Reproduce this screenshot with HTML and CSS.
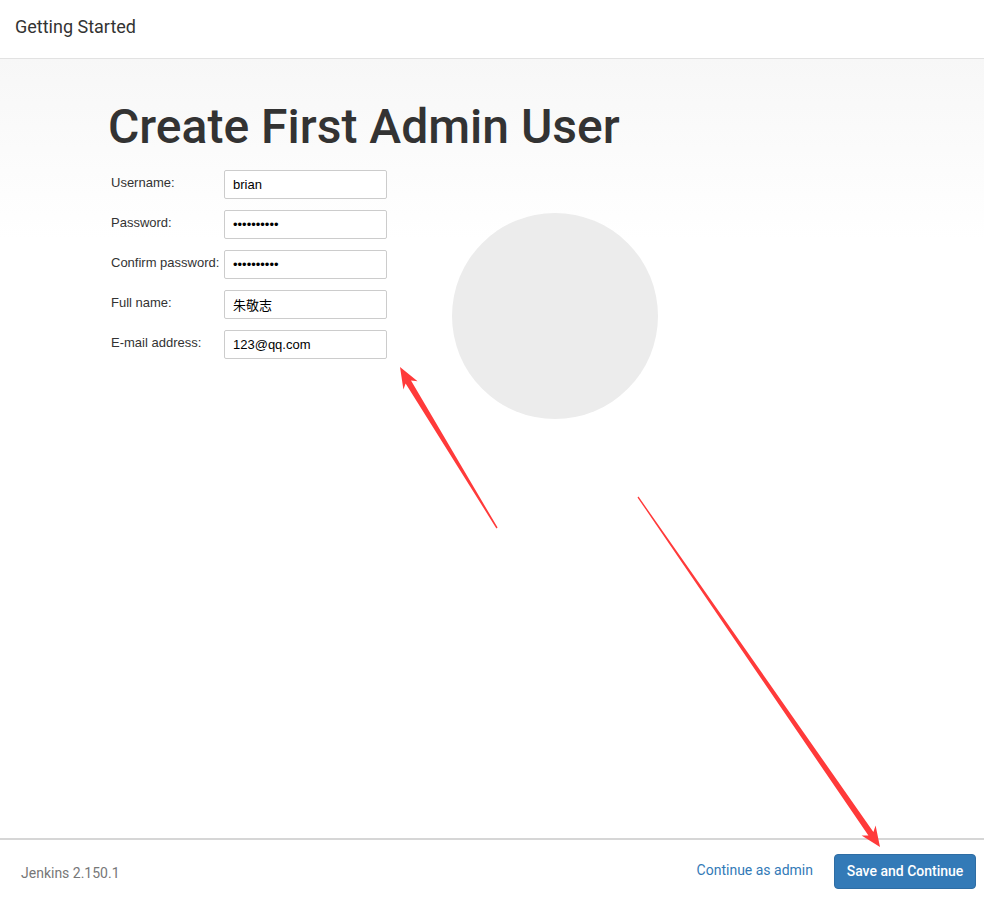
FILE: index.html
```html
<!DOCTYPE html>
<html lang="en">
<head>
<meta charset="utf-8">
<title>Getting Started</title>
<link rel="stylesheet" href="styles.css">
</head>
<body>
<div class="page">
  <header class="header">Getting Started</header>
  <main class="main">
    <h1 class="title">Create First Admin User</h1>
    <div class="content">
      <form class="form">
        <label class="label" for="u">Username:</label>
        <input class="input" id="u" type="text" value="brian">
        <label class="label" for="p">Password:</label>
        <input class="input" id="p" type="password" value="1234567890">
        <label class="label" for="c">Confirm password:</label>
        <input class="input" id="c" type="password" value="1234567890">
        <label class="label" for="f">Full name:</label>
        <input class="input" id="f" type="text" value="朱敬志">
        <label class="label" for="e">E-mail address:</label>
        <input class="input" id="e" type="text" value="123@qq.com">
      </form>
      <div class="circle"></div>
    </div>
  </main>
  <footer class="footer">
    <span class="version">Jenkins 2.150.1</span>
    <div class="actions">
      <a class="link" href="#">Continue as admin</a>
      <button class="btn" type="button">Save and Continue</button>
    </div>
  </footer>
  <svg class="arrows" width="984" height="899" viewBox="0 0 984 899">
    <polygon fill="#ff3a3a" points="400,367 417.6,381.2 411,380.6 497.6,527.6 496.4,528.4 405.6,383.6 403.4,389.6"/>
    <polygon fill="#ff3a3a" points="880,847 875.6,825.6 873.4,832 638.5,496.6 637.5,497.4 868.4,835.6 861.6,835.4"/>
  </svg>
</div>
</body>
</html>
```
FILE: styles.css
```css
* { box-sizing: border-box; }
html, body { margin: 0; padding: 0; }
body {
  font-family: Roboto, "Liberation Sans", Arial, sans-serif;
  color: #333;
  background: #fff;
}
.page {
  position: relative;
  width: 984px;
  height: 899px;
  display: flex;
  flex-direction: column;
  overflow: hidden;
}
.header {
  height: 59px;
  flex: none;
  border-bottom: 1px solid #e2e2e2;
  padding: 0 15px;
  display: flex;
  align-items: center;
  font-size: 18px;
  color: #333;
  padding-bottom: 6px;
}
.main {
  flex: 1;
  background: linear-gradient(#f7f7f7 0px, #ffffff 180px);
  padding: 40px 0 0 108px;
}
.title {
  margin: 0;
  font-size: 48px;
  font-weight: 500;
  line-height: 56px;
  color: #333;
}
.content {
  display: flex;
  align-items: flex-start;
  margin-top: 15px;
}
.form {
  display: grid;
  grid-template-columns: 116px 163px;
  row-gap: 11px;
  font-family: "Liberation Sans", Arial, "Noto Sans CJK SC", sans-serif;
}
.label {
  font-size: 13px;
  color: #333;
  padding-left: 3px;
  padding-top: 5px;
  line-height: 15px;
  white-space: nowrap;
}
.input {
  width: 163px;
  height: 29px;
  border: 1px solid #ccc;
  border-radius: 2px;
  padding: 0 8px;
  font-family: "Liberation Sans", Arial, "Noto Sans CJK SC", sans-serif;
  font-size: 13px;
  color: #000;
  background: #fff;
  margin: 0;
}
.circle {
  width: 206px;
  height: 206px;
  border-radius: 50%;
  background: #ececec;
  margin-left: 65px;
  margin-top: 43px;
}
.footer {
  height: 61px;
  flex: none;
  border-top: 2px solid #d6d6d6;
  display: flex;
  align-items: center;
  justify-content: space-between;
  padding: 0 8px 0 21px;
  background: #fff;
}
.version {
  font-size: 14px;
  color: #777;
  padding-top: 6px;
}
.actions {
  display: flex;
  align-items: center;
  gap: 21px;
}
.link {
  font-size: 14px;
  color: #337ab7;
  text-decoration: none;
}
.btn {
  height: 35px;
  width: 142px;
  padding: 0;
  background: #337ab7;
  border: 1px solid #2e6da4;
  border-radius: 4px;
  color: #fff;
  font-family: Roboto, "Liberation Sans", Arial, sans-serif;
  font-size: 14px;
  font-weight: 500;
  margin-top: 3px;
}
.arrows {
  position: absolute;
  left: 0;
  top: 0;
  pointer-events: none;
}
```
